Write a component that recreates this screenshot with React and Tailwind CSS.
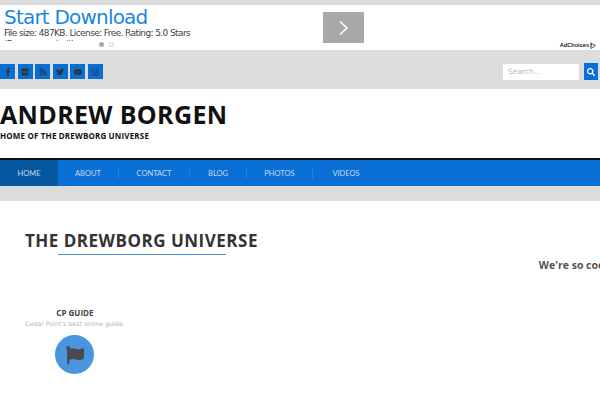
import React from 'react';
import { FaFacebookF, FaFlickr, FaRss, FaTwitter, FaYoutube, FaInstagram, FaSearch, FaFlag } from 'react-icons/fa';

const socials = [FaFacebookF, FaFlickr, FaRss, FaTwitter, FaYoutube, FaInstagram];
const menu = ['About', 'Contact', 'Blog', 'Photos', 'Videos'];

const menuWidths = ['w-[61px]', 'w-[71px]', 'w-[57px]', 'w-[66px]', 'w-[66px]'];

const AdBanner = () => (
  <div className="relative h-[45px] bg-white overflow-hidden font-['DejaVu_Sans',sans-serif]">
    <div className="flex items-start">
      <div className="w-[323px] pl-1">
        <div className="mt-[1px] text-[20px] leading-[22px] tracking-[-0.8px] text-[#1a86e0]">Start Download</div>
        <p className="h-[13px] w-[200px] overflow-hidden text-[9px] leading-[11px] tracking-[-0.6px] text-[#444]">
          File size: 487KB. License: Free. Rating: 5.0 Stars (Recommended!)
        </p>
      </div>
      <div className="mt-[7px] flex h-[31px] w-[41px] items-center justify-center bg-[#a9a9a9]">
        <svg width="12" height="16" viewBox="0 0 12 16" fill="none" stroke="white" strokeWidth="1.6">
          <path d="M2 1.5 L9 8 L2 14.5" />
        </svg>
      </div>
    </div>
    <div className="absolute left-[99px] top-[37px] flex gap-[5px]">
      <span className="h-[5px] w-[5px] rounded-full bg-[#aaa]" />
      <span className="h-[5px] w-[5px] rounded-full border border-[#ccc] bg-white" />
    </div>
    <div className="absolute right-[4px] top-[36px] flex items-center gap-[1px] font-['Liberation_Sans',sans-serif] text-[5.6px] font-bold leading-[9px] text-[#222]">
      AdChoices
      <svg width="6" height="7" viewBox="0 0 6 7" fill="none" stroke="#333" strokeWidth="0.8">
        <path d="M1 0.5 V6.5 L5.5 3.5 L1 1.5 V4.5" />
      </svg>
    </div>
  </div>
);

const App = () => (
  <div className="h-[400px] w-[600px] overflow-hidden bg-white font-['Open_Sans',sans-serif]">
    <div className="h-[5px] bg-[#dcdcdc]" />
    <AdBanner />

    {/* social + search */}
    <div className="flex h-[39px] items-center justify-between bg-[#dcdcdc] pr-[2px] pt-[4px]">
      <div className="flex gap-[2.5px]">
        {socials.map((Icon, i) => (
          <div key={i} className="flex h-[15px] w-[15px] items-center justify-center bg-[#0a6fd4] text-[#333]">
            <Icon size={8} />
          </div>
        ))}
      </div>
      <div className="flex items-center gap-[5px]">
        <div className="flex h-[16px] w-[76px] items-center bg-white pl-[5px] font-['DejaVu_Sans',sans-serif] text-[7.5px] text-[#bbb]">
          Search...
        </div>
        <div className="flex h-[17px] w-[14px] items-center justify-center bg-[#0a6fd4] text-white">
          <FaSearch size={8} />
        </div>
      </div>
    </div>

    {/* site title */}
    <div className="h-[69px] bg-white pt-[10px] text-[#111]">
      <h1 className="text-[25px] font-bold leading-[30px] tracking-[0.35px]">ANDREW BORGEN</h1>
      <p className="mt-[1px] text-[8px] font-bold leading-[11px] tracking-[0.17px]">HOME OF THE DREWBORG UNIVERSE</p>
    </div>

    {/* nav */}
    <nav className="flex h-[28px] border-t-2 border-[#111] bg-[#0a6fd4] font-['Lato',sans-serif] text-[7.5px] text-[#c4dcf4]">
      <div className="flex w-[58px] items-center justify-center bg-[#05589f] pt-[2px]">HOME</div>
      {menu.map((item, i) => (
        <div key={item} className={`flex items-center ${menuWidths[i]}`}>
          <span className="flex-1 pt-[2px] text-center uppercase">{item}</span>
          {i < 4 && <span className="h-[9px] w-px bg-[#2a82dc]" />}
        </div>
      ))}
    </nav>
    <div className="h-[15px] bg-[#dcdcdc]" />

    {/* content */}
    <div className="pl-[25px] pt-[28px]">
      <h2 className="text-[17px] font-bold leading-[23px] tracking-[0.5px] text-[#333]">THE DREWBORG UNIVERSE</h2>
      <div className="ml-[33px] mt-[2px] h-px w-[168px] bg-[#4a90d9]" />
      <div className="flex">
        <div className="mt-[53px] flex w-[101px] flex-col items-center">
          <h3 className="text-[8px] font-bold leading-[10px] text-[#444]">CP GUIDE</h3>
          <p className="mt-[1px] whitespace-nowrap font-['DejaVu_Sans',sans-serif] text-[6.3px] leading-[10px] text-[#b5b5b5]">Cedar Point's best online guide.</p>
          <div className="mt-[6px] flex h-[39px] w-[39px] items-center justify-center rounded-full bg-[#4a95e0] text-[#4a4a4a]">
            <FaFlag size={18} />
          </div>
        </div>
        <p className="ml-[414px] mt-[3px] whitespace-nowrap text-[10.5px] font-bold leading-[14px] text-[#555]">We're so cool</p>
      </div>
    </div>
  </div>
);

export default App;
